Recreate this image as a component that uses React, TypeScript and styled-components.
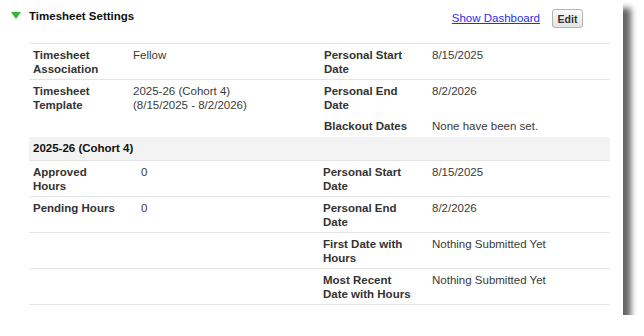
import styled, { createGlobalStyle } from 'styled-components';

type Pair = { label: string; value: string };
type Row = { left?: Pair; right: Pair };

const settingsRows: Row[] = [
  {
    left: { label: 'Timesheet Association', value: 'Fellow' },
    right: { label: 'Personal Start Date', value: '8/15/2025' },
  },
  {
    left: { label: 'Timesheet Template', value: '2025-26 (Cohort 4)\n(8/15/2025 - 8/2/2026)' },
    right: { label: 'Personal End Date', value: '8/2/2026' },
  },
  {
    right: { label: 'Blackout Dates', value: 'None have been set.' },
  },
];

const cohortRows: Row[] = [
  {
    left: { label: 'Approved Hours', value: '0' },
    right: { label: 'Personal Start Date', value: '8/15/2025' },
  },
  {
    left: { label: 'Pending Hours', value: '0' },
    right: { label: 'Personal End Date', value: '8/2/2026' },
  },
  {
    right: { label: 'First Date with Hours', value: 'Nothing Submitted Yet' },
  },
  {
    right: { label: 'Most Recent Date with Hours', value: 'Nothing Submitted Yet' },
  },
];

const App = (): JSX.Element => {
  return (
    <>
      <GlobalStyle />
      <Panel>
        <Header>
          <Arrow />
          <Title>Timesheet Settings</Title>
          <DashLink href="#">Show Dashboard</DashLink>
          <EditButton type="button">Edit</EditButton>
        </Header>
        <Content>
          <Table>
            <colgroup>
              <col width={100} />
              <col width={191} />
              <col width={108} />
              <col width={182} />
            </colgroup>
            <tbody>
              {settingsRows.map((row, i) => (
                <Tr key={`s_${i}`} $line={i < 2}>
                  <Label $padRight={8}>{row.left?.label}</Label>
                  <Value>{row.left?.value}</Value>
                  <Label $padRight={8}>{row.right.label}</Label>
                  <Value>{row.right.value}</Value>
                </Tr>
              ))}
            </tbody>
          </Table>
          <Table>
            <colgroup>
              <col width={108} />
              <col width={182} />
              <col width={109} />
              <col width={182} />
            </colgroup>
            <tbody>
              <tr>
                <Band colSpan={4}>2025-26 (Cohort 4)</Band>
              </tr>
              {cohortRows.map((row, i) => (
                <Tr key={`c_${i}`} $line $last={i === cohortRows.length - 1}>
                  <Label $padRight={14}>{row.left?.label}</Label>
                  <Value>{row.left?.value}</Value>
                  <Label $padRight={14}>{row.right.label}</Label>
                  <Value>{row.right.value}</Value>
                </Tr>
              ))}
            </tbody>
          </Table>
        </Content>
      </Panel>
    </>
  );
};

export default App;

const GlobalStyle = createGlobalStyle`
  html, body {
    margin: 0;
    padding: 0;
    background: #fff;
  }
  body {
    font-family: "Liberation Sans", Arial, sans-serif;
    font-size: 11.5px;
    color: #333;
  }
`;

const Panel = styled.div`
  width: 623px;
  background: #fff;
  padding-bottom: 10px;
  box-shadow: 8px 8px 6px rgba(0, 0, 0, 0.6);
`;

const Header = styled.div`
  display: flex;
  align-items: flex-start;
  box-sizing: border-box;
  height: 43px;
  padding: 9px 40px 0 11px;
`;

const Arrow = styled.span`
  width: 0;
  height: 0;
  margin-top: 3px;
  margin-right: 8px;
  border-left: 5.5px solid transparent;
  border-right: 5.5px solid transparent;
  border-top: 7px solid #34b534;
`;

const Title = styled.div`
  flex: 1;
  font-weight: bold;
  line-height: 14px;
  color: #111;
`;

const DashLink = styled.a`
  margin-top: 2px;
  margin-right: 12px;
  line-height: 14px;
  color: #2b2bef;
  text-decoration: underline;
`;

const EditButton = styled.button`
  width: 31px;
  height: 19px;
  padding: 0;
  border: 1px solid #b3b3b3;
  border-radius: 3px;
  background: linear-gradient(#fbfbfb, #e4e4e4);
  font-family: "Liberation Sans", Arial, sans-serif;
  font-size: 10.5px;
  font-weight: bold;
  color: #333;
`;

const Content = styled.div`
  padding: 0 13px 0 29px;
`;

const Table = styled.table`
  width: 100%;
  border-collapse: collapse;
  table-layout: fixed;
`;

const Tr = styled.tr<{ $line?: boolean; $last?: boolean }>`
  td {
    border-top: ${(p) => (p.$line ? '1px solid #e4e4e4' : '0')};
    border-bottom: ${(p) => (p.$last ? '1px solid #e4e4e4' : '0')};
    padding-bottom: ${(p) => (p.$line ? '3px' : '4px')};
  }
`;

const Label = styled.td<{ $padRight: number }>`
  vertical-align: top;
  padding: 4px ${(p) => p.$padRight}px 3px 4px;
  line-height: 14px;
  font-weight: bold;
  color: #333;
`;

const Value = styled.td`
  vertical-align: top;
  padding: 4px 8px 3px 4px;
  line-height: 14px;
  white-space: pre-line;
  color: #3a3a3a;
`;

const Band = styled.td`
  padding: 4px 4px 5px;
  line-height: 14px;
  background: #f3f3f3;
  font-weight: bold;
  color: #111;
`;
